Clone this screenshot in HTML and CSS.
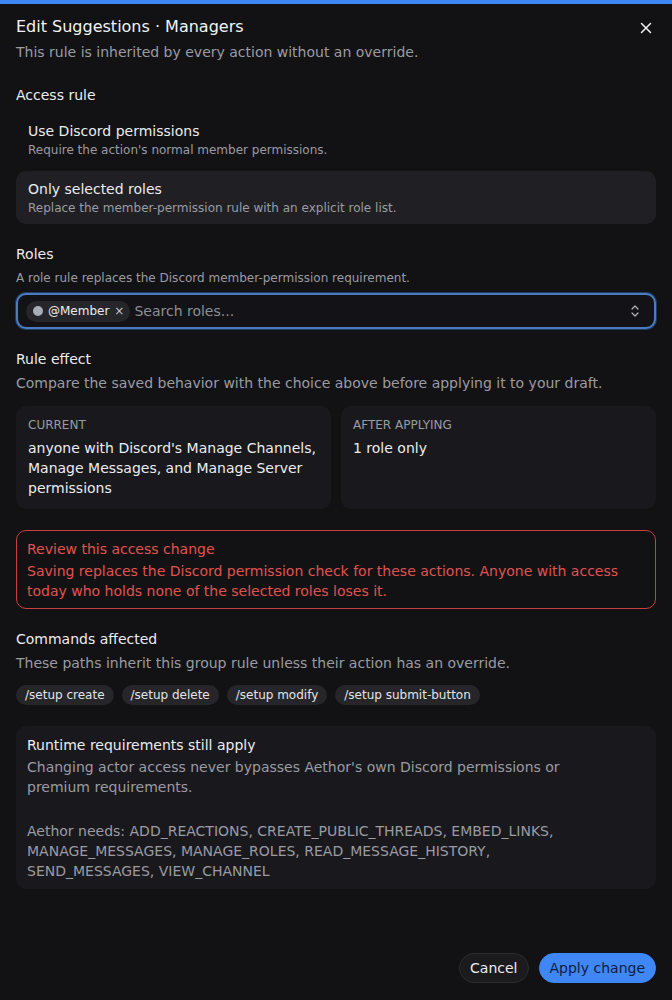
FILE: index.html
```html
<!DOCTYPE html>
<html lang="en">
<head>
  <meta charset="UTF-8" />
  <meta name="viewport" content="width=device-width, initial-scale=1.0" />
  <title>Edit Suggestions · Managers</title>
  <link rel="stylesheet" href="styles.css">
</head>
<body>
  <div class="topbar"></div>

  <div class="dialog">
    <div class="header">
      <div>
        <h2 class="title">Edit Suggestions · Managers</h2>
        <p class="subtitle">This rule is inherited by every action without an override.</p>
      </div>
      <button class="close" aria-label="Close">
        <svg width="12" height="12" viewBox="0 0 12 12"><path d="M1.5 1.5l9 9M10.5 1.5l-9 9" stroke="#f2f2f4" stroke-width="1.5" stroke-linecap="round"/></svg>
      </button>
    </div>

    <div class="section access">
      <div class="label">Access rule</div>
      <div class="options">
        <div class="option">
          <div class="option-title">Use Discord permissions</div>
          <div class="option-desc">Require the action's normal member permissions.</div>
        </div>
        <div class="option selected">
          <div class="option-title">Only selected roles</div>
          <div class="option-desc">Replace the member-permission rule with an explicit role list.</div>
        </div>
      </div>
    </div>

    <div class="section">
      <div class="label">Roles</div>
      <div class="hint">A role rule replaces the Discord member-permission requirement.</div>
      <div class="select">
        <span class="role-chip"><span class="dot"></span>@Member<span class="remove">×</span></span>
        <input class="search" type="text" placeholder="Search roles...">
        <svg class="updown" width="10" height="14" viewBox="0 0 10 14"><path d="M2 5l3-3 3 3M2 9l3 3 3-3" fill="none" stroke="#b4b4bb" stroke-width="1.2" stroke-linecap="round" stroke-linejoin="round"/></svg>
      </div>
    </div>

    <div class="section">
      <div class="label">Rule effect</div>
      <p class="desc">Compare the saved behavior with the choice above before applying it to your draft.</p>
      <div class="compare">
        <div class="card">
          <div class="card-label">Current</div>
          <div class="card-value">anyone with Discord's Manage Channels, Manage Messages, and Manage Server permissions</div>
        </div>
        <div class="card">
          <div class="card-label">After applying</div>
          <div class="card-value">1 role only</div>
        </div>
      </div>
    </div>

    <div class="alert">
      <div class="alert-title">Review this access change</div>
      <div>Saving replaces the Discord permission check for these actions. Anyone with access today who holds none of the selected roles loses it.</div>
    </div>

    <div class="section">
      <div class="label">Commands affected</div>
      <p class="desc">These paths inherit this group rule unless their action has an override.</p>
      <div class="commands">
        <span class="cmd">/setup create</span>
        <span class="cmd">/setup delete</span>
        <span class="cmd">/setup modify</span>
        <span class="cmd">/setup submit-button</span>
      </div>
    </div>

    <div class="runtime">
      <div class="runtime-title">Runtime requirements still apply</div>
      <p class="runtime-text">Changing actor access never bypasses Aethor's own Discord permissions or premium requirements.</p>
      <p class="runtime-text needs">Aethor needs: ADD_REACTIONS, CREATE_PUBLIC_THREADS, EMBED_LINKS, MANAGE_MESSAGES, MANAGE_ROLES, READ_MESSAGE_HISTORY, SEND_MESSAGES, VIEW_CHANNEL</p>
    </div>

    <div class="footer">
      <button class="btn btn-cancel">Cancel</button>
      <button class="btn btn-apply">Apply change</button>
    </div>
  </div>
</body>
</html>
```

FILE: styles.css
```css
body {
  background-color: #121215;
  color: #ececef;
  font-family: "DejaVu Sans", sans-serif;
  margin: 0;
  padding: 0;
}
.topbar {
  height: 4px;
  background-color: #3d86f5;
}
.dialog {
  display: flex;
  flex-direction: column;
  min-height: 996px;
  box-sizing: border-box;
  padding: 11px 16px 17px;
}
.header {
  display: flex;
  justify-content: space-between;
  align-items: flex-start;
}
.title {
  margin: 0;
  font-size: 16px;
  font-weight: normal;
  line-height: 24px;
  color: #f2f2f4;
}
.subtitle {
  margin: 3px 0 0;
  font-size: 14px;
  line-height: 20px;
  color: #9b9ba3;
}
.close {
  background: none;
  border: none;
  padding: 0;
  margin: 5px 2px 0 0;
  width: 16px;
  height: 16px;
  display: flex;
  align-items: center;
  justify-content: center;
  cursor: pointer;
}
.section {
  margin-top: 20px;
}
.access {
  margin-top: 23px;
}
.label {
  font-size: 14px;
  line-height: 20px;
  color: #ececef;
}
.hint {
  margin-top: 5px;
  font-size: 12px;
  line-height: 18px;
  color: #9b9ba3;
}
.desc {
  margin: 4px 0 0;
  font-size: 14px;
  line-height: 20px;
  color: #9b9ba3;
}
.options {
  display: flex;
  flex-direction: column;
  gap: 5px;
  margin-top: 8px;
}
.option {
  padding: 9px 12px 8px;
  border-radius: 10px;
}
.option.selected {
  background-color: #202024;
}
.option-title {
  font-size: 14px;
  line-height: 18px;
  margin-bottom: 2px;
}
.option-desc {
  font-size: 12px;
  line-height: 16px;
  color: #9b9ba3;
}
.select {
  margin-top: 6px;
  display: flex;
  align-items: center;
  gap: 4px;
  height: 36px;
  box-sizing: border-box;
  padding: 0 14px 0 8px;
  background-color: #131317;
  border: 2px solid #4a7cc0;
  border-radius: 10px;
  box-shadow: 0 0 0 1px #1f3a63;
}
.role-chip {
  display: inline-flex;
  align-items: center;
  gap: 5px;
  height: 21px;
  padding: 0 6px 0 7px;
  border-radius: 11px;
  background-color: #26262a;
  font-size: 12px;
  color: #ececef;
}
.dot {
  width: 10px;
  height: 10px;
  border-radius: 50%;
  background-color: #a9aeb6;
}
.remove {
  font-size: 12px;
  color: #c4c4ca;
}
.search {
  flex: 1;
  background: none;
  border: none;
  outline: none;
  font-family: inherit;
  font-size: 14px;
  color: #ececef;
  padding: 0;
}
.search::placeholder {
  color: #8e8e96;
}
.compare {
  display: grid;
  grid-template-columns: 1fr 1fr;
  gap: 10px;
  margin-top: 13px;
}
.card {
  background-color: #19191d;
  border-radius: 10px;
  padding: 11px 12px;
}
.card-label {
  font-size: 12px;
  line-height: 16px;
  text-transform: uppercase;
  color: #9b9ba3;
}
.card-value {
  margin-top: 5px;
  font-size: 14px;
  line-height: 20px;
}
.alert {
  margin-top: 21px;
  border: 1px solid #c9403f;
  border-radius: 10px;
  padding: 8px 10px 7px;
  font-size: 14px;
  line-height: 20px;
  color: #e0524f;
}
.alert-title {
  margin-bottom: 2px;
}
.commands {
  display: flex;
  flex-wrap: wrap;
  gap: 8px;
  margin-top: 12px;
}
.cmd {
  background-color: #26262a;
  border-radius: 10px;
  padding: 2px 9px;
  font-size: 12px;
  line-height: 16px;
  color: #e4e4e8;
}
.runtime {
  margin-top: 21px;
  background-color: #19191d;
  border-radius: 10px;
  padding: 9px 11px 8px;
}
.runtime-title {
  font-size: 14px;
  line-height: 20px;
}
.runtime-text {
  margin: 2px 0 0;
  max-width: 560px;
  font-size: 14px;
  line-height: 20px;
  color: #9b9ba3;
}
.runtime-text.needs {
  margin-top: 24px;
}
.footer {
  margin-top: auto;
  display: flex;
  justify-content: flex-end;
  gap: 10px;
}
.btn {
  font-family: "DejaVu Sans", sans-serif;
  font-size: 14px;
  height: 30px;
  border-radius: 15px;
  padding: 0 10px;
  cursor: pointer;
}
.btn-cancel {
  background-color: #1b1b1e;
  border: 1px solid #2c2c30;
  color: #ececef;
}
.btn-apply {
  background-color: #3f86f6;
  border: 1px solid #3f86f6;
  color: #10203f;
}
```
